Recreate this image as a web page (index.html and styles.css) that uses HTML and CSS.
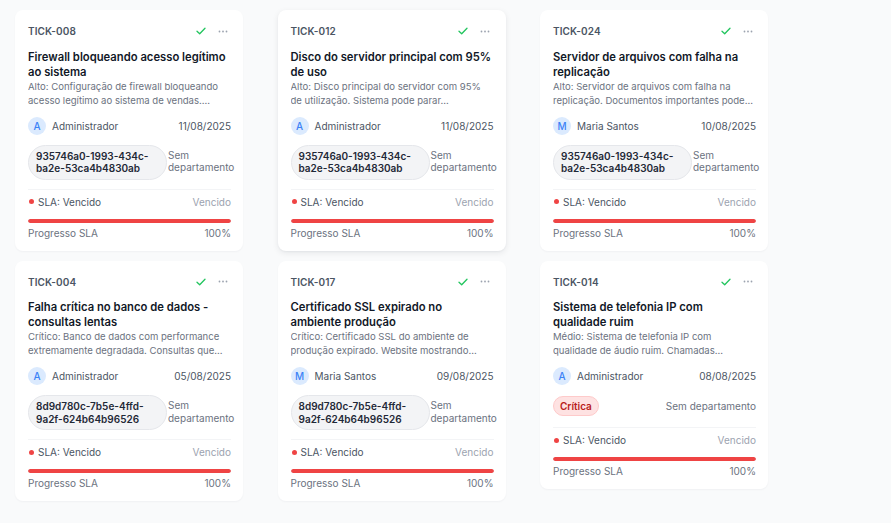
FILE: index.html
```html
<!DOCTYPE html>
<html lang="pt-BR">
<head>
<meta charset="utf-8">
<title>Tickets</title>
<link rel="stylesheet" href="styles.css">
</head>
<body>
<div class="board">
  <div class="column">
    <div class="card">
      <div class="card-head"><span class="code">TICK-008</span><div class="actions"><span class="icon-btn"><svg width="10" height="8" viewBox="0 0 10 8"><path d="M1 4.2 L3.7 6.8 L9 1.2" fill="none" stroke="#22c55e" stroke-width="1.3" stroke-linecap="round" stroke-linejoin="round"/></svg></span><span class="icon-btn"><svg width="10" height="3" viewBox="0 0 10 3"><circle cx="1.5" cy="1.5" r="0.9" fill="#9ca3af"/><circle cx="5" cy="1.5" r="0.9" fill="#9ca3af"/><circle cx="8.5" cy="1.5" r="0.9" fill="#9ca3af"/></svg></span></div></div>
      <h3 class="title">Firewall bloqueando acesso legítimo ao sistema</h3>
      <p class="desc">Alto: Configuração de firewall bloqueando acesso legítimo ao sistema de vendas....</p>
      <div class="meta"><div class="user"><span class="avatar">A</span><span>Administrador</span></div><span class="date">11/08/2025</span></div>
      <div class="tags"><span class="pill">935746a0-1993-434c-ba2e-53ca4b4830ab</span><span class="dept">Sem departamento</span></div>
      <div class="sla"><div class="sla-row"><span class="sla-label"><span class="dot"></span>SLA: Vencido</span><span class="sla-state">Vencido</span></div><div class="bar"><div class="fill" style="width:100%"></div></div><div class="sla-row progress"><span>Progresso SLA</span><span>100%</span></div></div>
    </div>
    <div class="card">
      <div class="card-head"><span class="code">TICK-004</span><div class="actions"><span class="icon-btn"><svg width="10" height="8" viewBox="0 0 10 8"><path d="M1 4.2 L3.7 6.8 L9 1.2" fill="none" stroke="#22c55e" stroke-width="1.3" stroke-linecap="round" stroke-linejoin="round"/></svg></span><span class="icon-btn"><svg width="10" height="3" viewBox="0 0 10 3"><circle cx="1.5" cy="1.5" r="0.9" fill="#9ca3af"/><circle cx="5" cy="1.5" r="0.9" fill="#9ca3af"/><circle cx="8.5" cy="1.5" r="0.9" fill="#9ca3af"/></svg></span></div></div>
      <h3 class="title">Falha crítica no banco de dados - consultas lentas</h3>
      <p class="desc">Crítico: Banco de dados com performance extremamente degradada. Consultas que...</p>
      <div class="meta"><div class="user"><span class="avatar">A</span><span>Administrador</span></div><span class="date">05/08/2025</span></div>
      <div class="tags"><span class="pill">8d9d780c-7b5e-4ffd-9a2f-624b64b96526</span><span class="dept">Sem departamento</span></div>
      <div class="sla"><div class="sla-row"><span class="sla-label"><span class="dot"></span>SLA: Vencido</span><span class="sla-state">Vencido</span></div><div class="bar"><div class="fill" style="width:100%"></div></div><div class="sla-row progress"><span>Progresso SLA</span><span>100%</span></div></div>
    </div>
  </div>
  <div class="column">
    <div class="card hovered">
      <div class="card-head"><span class="code">TICK-012</span><div class="actions"><span class="icon-btn"><svg width="10" height="8" viewBox="0 0 10 8"><path d="M1 4.2 L3.7 6.8 L9 1.2" fill="none" stroke="#22c55e" stroke-width="1.3" stroke-linecap="round" stroke-linejoin="round"/></svg></span><span class="icon-btn"><svg width="10" height="3" viewBox="0 0 10 3"><circle cx="1.5" cy="1.5" r="0.9" fill="#9ca3af"/><circle cx="5" cy="1.5" r="0.9" fill="#9ca3af"/><circle cx="8.5" cy="1.5" r="0.9" fill="#9ca3af"/></svg></span></div></div>
      <h3 class="title">Disco do servidor principal com 95% de uso</h3>
      <p class="desc">Alto: Disco principal do servidor com 95% de utilização. Sistema pode parar...</p>
      <div class="meta"><div class="user"><span class="avatar">A</span><span>Administrador</span></div><span class="date">11/08/2025</span></div>
      <div class="tags"><span class="pill">935746a0-1993-434c-ba2e-53ca4b4830ab</span><span class="dept">Sem departamento</span></div>
      <div class="sla"><div class="sla-row"><span class="sla-label"><span class="dot"></span>SLA: Vencido</span><span class="sla-state">Vencido</span></div><div class="bar"><div class="fill" style="width:100%"></div></div><div class="sla-row progress"><span>Progresso SLA</span><span>100%</span></div></div>
    </div>
    <div class="card">
      <div class="card-head"><span class="code">TICK-017</span><div class="actions"><span class="icon-btn"><svg width="10" height="8" viewBox="0 0 10 8"><path d="M1 4.2 L3.7 6.8 L9 1.2" fill="none" stroke="#22c55e" stroke-width="1.3" stroke-linecap="round" stroke-linejoin="round"/></svg></span><span class="icon-btn"><svg width="10" height="3" viewBox="0 0 10 3"><circle cx="1.5" cy="1.5" r="0.9" fill="#9ca3af"/><circle cx="5" cy="1.5" r="0.9" fill="#9ca3af"/><circle cx="8.5" cy="1.5" r="0.9" fill="#9ca3af"/></svg></span></div></div>
      <h3 class="title">Certificado SSL expirado no ambiente produção</h3>
      <p class="desc">Crítico: Certificado SSL do ambiente de produção expirado. Website mostrando...</p>
      <div class="meta"><div class="user"><span class="avatar">M</span><span>Maria Santos</span></div><span class="date">09/08/2025</span></div>
      <div class="tags"><span class="pill">8d9d780c-7b5e-4ffd-9a2f-624b64b96526</span><span class="dept">Sem departamento</span></div>
      <div class="sla"><div class="sla-row"><span class="sla-label"><span class="dot"></span>SLA: Vencido</span><span class="sla-state">Vencido</span></div><div class="bar"><div class="fill" style="width:100%"></div></div><div class="sla-row progress"><span>Progresso SLA</span><span>100%</span></div></div>
    </div>
  </div>
  <div class="column">
    <div class="card">
      <div class="card-head"><span class="code">TICK-024</span><div class="actions"><span class="icon-btn"><svg width="10" height="8" viewBox="0 0 10 8"><path d="M1 4.2 L3.7 6.8 L9 1.2" fill="none" stroke="#22c55e" stroke-width="1.3" stroke-linecap="round" stroke-linejoin="round"/></svg></span><span class="icon-btn"><svg width="10" height="3" viewBox="0 0 10 3"><circle cx="1.5" cy="1.5" r="0.9" fill="#9ca3af"/><circle cx="5" cy="1.5" r="0.9" fill="#9ca3af"/><circle cx="8.5" cy="1.5" r="0.9" fill="#9ca3af"/></svg></span></div></div>
      <h3 class="title">Servidor de arquivos com falha na replicação</h3>
      <p class="desc">Alto: Servidor de arquivos com falha na replicação. Documentos importantes pode...</p>
      <div class="meta"><div class="user"><span class="avatar">M</span><span>Maria Santos</span></div><span class="date">10/08/2025</span></div>
      <div class="tags"><span class="pill">935746a0-1993-434c-ba2e-53ca4b4830ab</span><span class="dept">Sem departamento</span></div>
      <div class="sla"><div class="sla-row"><span class="sla-label"><span class="dot"></span>SLA: Vencido</span><span class="sla-state">Vencido</span></div><div class="bar"><div class="fill" style="width:100%"></div></div><div class="sla-row progress"><span>Progresso SLA</span><span>100%</span></div></div>
    </div>
    <div class="card">
      <div class="card-head"><span class="code">TICK-014</span><div class="actions"><span class="icon-btn"><svg width="10" height="8" viewBox="0 0 10 8"><path d="M1 4.2 L3.7 6.8 L9 1.2" fill="none" stroke="#22c55e" stroke-width="1.3" stroke-linecap="round" stroke-linejoin="round"/></svg></span><span class="icon-btn"><svg width="10" height="3" viewBox="0 0 10 3"><circle cx="1.5" cy="1.5" r="0.9" fill="#9ca3af"/><circle cx="5" cy="1.5" r="0.9" fill="#9ca3af"/><circle cx="8.5" cy="1.5" r="0.9" fill="#9ca3af"/></svg></span></div></div>
      <h3 class="title">Sistema de telefonia IP com qualidade ruim</h3>
      <p class="desc">Médio: Sistema de telefonia IP com qualidade de áudio ruim. Chamadas...</p>
      <div class="meta"><div class="user"><span class="avatar">A</span><span>Administrador</span></div><span class="date">08/08/2025</span></div>
      <div class="tags tags-badge"><span class="badge">Crítica</span><span class="dept single">Sem departamento</span></div>
      <div class="sla"><div class="sla-row"><span class="sla-label"><span class="dot"></span>SLA: Vencido</span><span class="sla-state">Vencido</span></div><div class="bar"><div class="fill" style="width:100%"></div></div><div class="sla-row progress"><span>Progresso SLA</span><span>100%</span></div></div>
    </div>
  </div>
</div>
</body>
</html>
```
FILE: styles.css
```css
* { box-sizing: border-box; }
html, body { margin: 0; padding: 0; }
body {
  background: #f9fafb;
  font-family: Inter, "Noto Sans", sans-serif;
  color: #111827;
  width: 891px;
  height: 523px;
  overflow: hidden;
}
.board {
  display: flex;
  align-items: flex-start;
  gap: 34.5px;
  padding: 10px 0 0 15px;
}
.column {
  width: 228px;
  display: flex;
  flex-direction: column;
  gap: 10px;
}
.card {
  background: #fff;
  border-radius: 8px;
  padding: 13px 12px 11px 13px;
  box-shadow: 0 1px 2px rgba(17, 24, 39, 0.04);
}
.card.hovered {
  box-shadow: 0 2px 6px rgba(17, 24, 39, 0.08), 0 1px 2px rgba(17, 24, 39, 0.04);
}
.card-head {
  display: flex;
  align-items: center;
  justify-content: space-between;
  height: 16px;
  margin-bottom: 10.5px;
}
.code {
  font-size: 10px;
  font-weight: 600;
  color: #4b5563;
  letter-spacing: 0.1px;
}
.actions { display: flex; gap: 6px; margin-right: 0.5px; }
.icon-btn {
  width: 16px;
  height: 16px;
  display: flex;
  align-items: center;
  justify-content: center;
}
.title {
  margin: 0;
  font-size: 11.25px;
  font-weight: 600;
  line-height: 15px;
  color: #111827;
}
.desc {
  margin: 0;
  font-size: 9.55px;
  line-height: 14px;
  color: #6b7280;
  display: -webkit-box;
  -webkit-line-clamp: 2;
  -webkit-box-orient: vertical;
  overflow: hidden;
}
.meta {
  margin-top: 9px;
  display: flex;
  align-items: center;
  justify-content: space-between;
  height: 18px;
  font-size: 10px;
  color: #4b5563;
}
.user { display: flex; align-items: center; gap: 6px; }
.avatar {
  width: 18px;
  height: 18px;
  border-radius: 50%;
  background: #dbeafe;
  color: #3b82f6;
  font-size: 10px;
  font-weight: 500;
  display: flex;
  align-items: center;
  justify-content: center;
}
.date { color: #4b5563; }
.tags {
  margin-top: 10px;
  display: flex;
  align-items: flex-start;
  justify-content: space-between;
}
.tags.tags-badge {
  margin-top: 11px;
  min-height: 22px;
}
.pill {
  flex: 0 0 139px;
  background: #f3f4f6;
  border: 1px solid #e5e7eb;
  border-radius: 18px;
  padding: 4px 7px 4px 7px;
  font-size: 10px;
  font-weight: 600;
  line-height: 12.5px;
  color: #1f2937;
}
.dept {
  font-size: 10px;
  line-height: 12.5px;
  color: #6b7280;
  padding-top: 4px;
  flex: 1 1 auto;
  padding-left: 1px;
}
.dept.single {
  flex: 0 0 auto;
  padding-top: 3px;
  line-height: 14px;
}
.badge {
  background: #fee2e2;
  border: 1px solid #fecaca;
  color: #b91c1c;
  font-size: 10px;
  font-weight: 600;
  line-height: 18px;
  height: 20px;
  padding: 0 6px;
  border-radius: 10px;
}
.sla {
  margin-top: 9px;
  border-top: 1px solid #f3f4f6;
  padding-top: 5px;
}
.sla-row {
  display: flex;
  justify-content: space-between;
  align-items: center;
  font-size: 10px;
  line-height: 14px;
}
.sla-label { display: flex; align-items: center; color: #4b5563; }
.dot {
  width: 5px;
  height: 5px;
  border-radius: 50%;
  background: #ef4444;
  margin: 0 4px 0 1px;
}
.sla-state { color: #9ca3af; }
.bar {
  margin-top: 10px;
  height: 4px;
  border-radius: 2px;
  background: #e5e7eb;
  overflow: hidden;
}
.fill { height: 100%; background: #ef4444; border-radius: 2px; }
.progress { margin-top: 3px; color: #6b7280; }
```
